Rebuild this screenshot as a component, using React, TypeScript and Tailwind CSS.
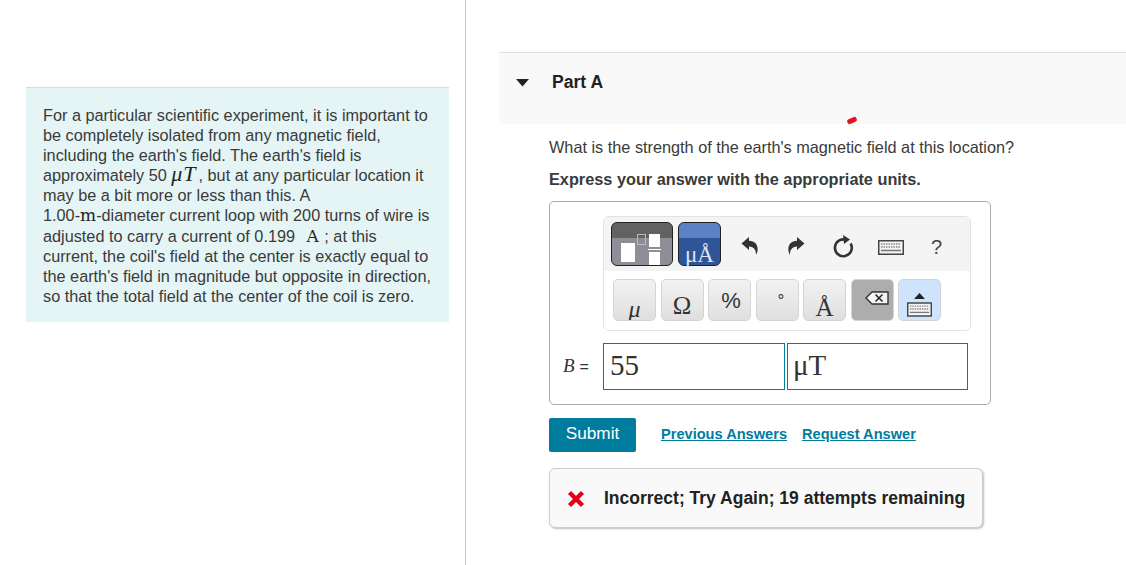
import React from 'react';

const Undo = ({ flip }: { flip?: boolean }) => (
    <svg width="18" height="20" viewBox="0 0 18 20" className={flip ? '-scale-x-100' : ''}>
        <path d="M0.5 7.5 L8 1 L8 4.8 C13.5 4.8 17 8.5 16.6 14 C16.5 15.8 16 17.4 15 18.8 C15.3 14 13 10.6 8 10.4 L8 14 Z" fill="#333" />
    </svg>
);

const Keys = ({ w = 26, h = 15 }: { w?: number; h?: number }) => (
    <svg width={w} height={h} viewBox="0 0 26 15">
        <rect x="0.75" y="0.75" width="24.5" height="13.5" fill="#f4f4f4" stroke="#444" strokeWidth="1.5" />
        <path d="M3 4h20M3 7h20" stroke="#888" strokeWidth="1.5" strokeDasharray="1.5 1" />
        <path d="M3 10.5h20" stroke="#777" strokeWidth="1.5" />
    </svg>
);

const Key = ({ children, className = '' }: { children?: React.ReactNode; className?: string }) => (
    <div className={`w-[43px] h-[42px] rounded-[5px] border border-[#d4d4d4] bg-gradient-to-b from-[#f2f2f2] to-[#dfdfdf] flex justify-center text-[#333] overflow-hidden ${className}`}>
        {children}
    </div>
);

export default function App() {
    return (
        <div className="w-[1126px] h-[565px] flex overflow-hidden bg-white text-[#333] font-['Liberation_Sans',Arial,sans-serif] relative">
            {/* left column */}
            <div className="w-[466px] h-full border-r border-[#c8c8c8] pt-[87px] pl-[26px] shrink-0">
                <div className="w-[423px] h-[235px] bg-[#e5f5f6] border-t border-[#dcdcdc] pl-[17px] pt-[17px] text-[16.25px] leading-[20.1px] text-[#3a3a3a] whitespace-nowrap">
                    <p>For a particular scientific experiment, it is important to</p>
                    <p>be completely isolated from any magnetic field,</p>
                    <p>including the earth's field. The earth's field is</p>
                    <p>approximately 50 <span className="font-['Liberation_Serif',serif] italic text-[22px] leading-[0] tracking-[1px] text-[#222] pr-[2px]">μT</span>, but at any particular location it</p>
                    <p>may be a bit more or less than this. A</p>
                    <p>1.00-<span className="font-['DejaVu_Serif',serif] text-[17px] leading-[0] text-[#222]">m</span>-diameter current loop with 200 turns of wire is</p>
                    <p>adjusted to carry a current of 0.199 <span className="font-['DejaVu_Serif',serif] text-[17px] leading-[0] text-[#222] pl-[7px] pr-[1px]">A</span> ; at this</p>
                    <p>current, the coil's field at the center is exactly equal to</p>
                    <p>the earth's field in magnitude but opposite in direction,</p>
                    <p>so that the total field at the center of the coil is zero.</p>
                </div>
            </div>

            {/* right column */}
            <div className="flex-1 pl-[33px] pt-[52px]">
                <div className="h-[72px] bg-[#f9f9f9] border-t border-[#e0e0e0] flex items-start pt-[19px]">
                    <svg width="14" height="8" viewBox="0 0 14 8" className="ml-[17px] mt-[7px]"><path d="M0 0h13L6.5 7.5z" fill="#222" /></svg>
                    <div className="ml-[22px] font-bold text-[17.6px] leading-[20px] text-[#222]">Part A</div>
                </div>

                <div className="pl-[50px]">
                    <div className="mt-[13px] text-[16.27px] leading-[20px] text-[#3a3a3a] whitespace-nowrap">What is the strength of the earth's magnetic field at this location?</div>
                    <div className="mt-[12px] text-[16.3px] leading-[20px] font-bold text-[#3a3a3a] whitespace-nowrap">Express your answer with the appropriate units.</div>

                    <div className="mt-[12px] w-[442px] h-[204px] rounded-[5px] border border-[#aaa] pl-[53px] pt-[14px]">
                        {/* math toolbar */}
                        <div className="w-[368px] h-[115px] rounded-[6px] border border-[#e2e2e2] overflow-hidden">
                            <div className="h-[54px] bg-[#f4f4f4] flex items-start pt-[5px] pl-[7px]">
                                <div className="w-[62px] h-[44px] rounded-[6px] border border-[#222] bg-gradient-to-b from-[#626262] from-35% to-[#8e8e96] to-35% flex items-end pl-[9px] overflow-hidden">
                                    <div className="w-[14px] h-[19px] bg-white mb-[3px]" />
                                    <div className="w-[9px] h-[11px] border border-[#bbb] mb-[20px] ml-[2px]" />
                                    <div className="flex flex-col items-center gap-[2px] ml-[2px]">
                                        <div className="w-[11px] h-[13px] bg-white" />
                                        <div className="w-[13px] h-[1px] bg-white" />
                                        <div className="w-[11px] h-[13px] bg-white" />
                                    </div>
                                </div>
                                <div className="ml-[5px] w-[43px] h-[44px] rounded-[6px] border border-[#222] bg-gradient-to-b from-[#5a82c4] from-35% to-[#2f5597] to-35% text-[#dbe6f7] flex justify-center items-end font-['Liberation_Serif',serif] text-[23px] leading-[20px]">
                                    μÅ
                                </div>
                                <div className="ml-[20px] mt-[14px]"><Undo /></div>
                                <div className="ml-[28px] mt-[14px]"><Undo flip /></div>
                                <svg width="22" height="24" viewBox="0 0 22 24" className="ml-[27px] mt-[12px]" fill="none">
                                    <path d="M15 6.2 A8.4 8.4 0 1 0 18.6 9.5" stroke="#333" strokeWidth="2.6" />
                                    <path d="M11 1 L18 5.4 L12 10 Z" fill="#333" />
                                </svg>
                                <div className="ml-[24px] mt-[18px]"><Keys /></div>
                                <div className="ml-[27px] mt-[14px] text-[20px] leading-[22px] text-[#444]">?</div>
                            </div>
                            <div className="h-[59px] bg-white flex gap-[4.5px] pl-[9px] pt-[8px]">
                                <Key className="items-end font-['Liberation_Serif',serif] italic text-[24px] leading-[22px]">μ</Key>
                                <Key className="items-end pb-[2px] font-['Liberation_Serif',serif] text-[25px] leading-[24px]">Ω</Key>
                                <Key className="items-center pt-[1px] pl-[3px] text-[22px]">%</Key>
                                <Key className="pt-[11px] pl-[8px] text-[17px] leading-[20px]">°</Key>
                                <Key className="items-end font-['Liberation_Serif',serif] text-[25px] leading-[24px]">Å</Key>
                                <Key className="!bg-none !bg-[#adadad] border-[#b0b0b0] pt-[11px] pl-[13px] !justify-start">
                                    <svg width="24" height="14" viewBox="0 0 24 14" fill="none">
                                        <path d="M1 7 L7 1 H23 V13 H7 Z" fill="#f4f4f4" stroke="#333" strokeWidth="1.4" />
                                        <path d="M10.5 3.5 L17.5 10.5 M17.5 3.5 L10.5 10.5" stroke="#222" strokeWidth="1.5" />
                                    </svg>
                                </Key>
                                <Key className="!bg-none !bg-[#cde4fc] border-[#c4d6e8] flex-col items-center pt-[10px] gap-[3px]">
                                    <svg width="11" height="6" viewBox="0 0 11 6"><path d="M5.5 0 L11 6 H0 Z" fill="#222" /></svg>
                                    <Keys w={25} h={15} />
                                </Key>
                            </div>
                        </div>

                        {/* answer row */}
                        <div className="-ml-[40px] mt-[12px] flex items-center">
                            <div className="w-[40px] flex items-center gap-[5px] text-[#333] font-['Liberation_Serif',serif]"><span className="italic text-[19px]">B</span><span className="font-['Liberation_Sans',sans-serif] text-[16px]">=</span></div>
                            <div className="w-[182px] h-[47px] border border-[#007c9e] pl-[6px] font-['Liberation_Serif',serif] text-[29px] leading-[42px] text-[#333]">55</div>
                            <div className="ml-[2px] w-[181px] h-[47px] border border-[#007c9e] pl-[5px] font-['Liberation_Serif',serif] text-[29px] leading-[42px] text-[#333]">μT</div>
                        </div>
                    </div>

                    <div className="mt-[13px] flex items-center">
                        <div className="w-[87px] h-[34px] rounded-[2px] bg-[#007c9e] text-white text-[17.2px] leading-[31px] text-center">Submit</div>
                        <div className="ml-[25px] text-[14.6px] font-bold text-[#007c9e] underline">Previous Answers</div>
                        <div className="ml-[15px] text-[14.6px] font-bold text-[#007c9e] underline">Request Answer</div>
                    </div>

                    <div className="mt-[16px] w-[434px] h-[60px] rounded-[6px] border border-[#ccc] bg-[#f9f9f9] shadow-[1px_1px_2px_rgba(0,0,0,0.25)] flex items-center pl-[17px] pt-[1px]">
                        <svg width="18" height="18" viewBox="0 0 18 18"><path d="M2.5 2.5 L15.5 15.5 M15.5 2.5 L2.5 15.5" stroke="#e2001a" strokeWidth="4.4" /></svg>
                        <div className="ml-[19px] text-[17.5px] font-bold text-[#222] whitespace-nowrap">Incorrect; Try Again; 19 attempts remaining</div>
                    </div>
                </div>
            </div>

            {/* stray red mark */}
            <div className="absolute left-[847px] top-[118px] w-[10px] h-[5px] rounded-full bg-[#e2141c] -rotate-[25deg]" />
        </div>
    );
}
